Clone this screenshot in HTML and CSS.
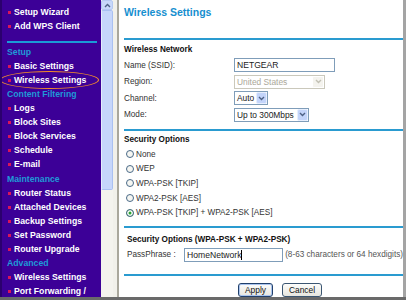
FILE: index.html
```html
<!DOCTYPE html>
<html lang="en">
<head>
    <meta charset="UTF-8">
    <meta name="viewport" content="width=device-width, initial-scale=1.0">
    <title>Wireless Settings</title>
    <link rel="stylesheet" href="styles.css">
</head>
<body>
    <div class="window">
        <!-- left menu -->
        <div class="menu">
            <div class="menu-item">Setup Wizard</div>
            <div class="menu-item">Add WPS Client</div>
            <div class="menu-rule"></div>
            <div class="menu-head">Setup</div>
            <div class="menu-item">Basic Settings</div>
            <div class="menu-item menu-item-circled">Wireless Settings</div>
            <div class="menu-head">Content Filtering</div>
            <div class="menu-item">Logs</div>
            <div class="menu-item">Block Sites</div>
            <div class="menu-item">Block Services</div>
            <div class="menu-item">Schedule</div>
            <div class="menu-item">E-mail</div>
            <div class="menu-head">Maintenance</div>
            <div class="menu-item">Router Status</div>
            <div class="menu-item">Attached Devices</div>
            <div class="menu-item">Backup Settings</div>
            <div class="menu-item">Set Password</div>
            <div class="menu-item">Router Upgrade</div>
            <div class="menu-head">Advanced</div>
            <div class="menu-item">Wireless Settings</div>
            <div class="menu-item">Port Forwarding /</div>
        </div>

        <div class="scrollbar">
            <div class="scroll-btn">
                <svg width="7" height="5" viewBox="0 0 7 5"><path d="M1 4 L3.5 1.5 L6 4" fill="none" stroke="#4d6185" stroke-width="1.4"/></svg>
            </div>
            <div class="scroll-thumb"></div>
        </div>
        <div class="divider"></div>

        <!-- main form -->
        <div class="content">
            <h2 class="title">Wireless Settings</h2>
            <div class="rule"></div>

            <div class="section-title">Wireless Network</div>
            <div class="field">
                <span class="field-label">Name (SSID):</span>
                <span class="textbox textbox-ssid">NETGEAR</span>
            </div>
            <div class="field">
                <span class="field-label">Region:</span>
                <span class="select select-disabled select-region">
                    <span class="select-value">United States</span>
                    <span class="select-arrow">
                        <svg width="7" height="5" viewBox="0 0 7 5"><path d="M1 1 L3.5 3.5 L6 1" fill="none" stroke="#c2c0b4" stroke-width="1.4"/></svg>
                    </span>
                </span>
            </div>
            <div class="field">
                <span class="field-label">Channel:</span>
                <span class="select select-channel">
                    <span class="select-value">Auto</span>
                    <span class="select-arrow">
                        <svg width="7" height="5" viewBox="0 0 7 5"><path d="M1 1 L3.5 3.5 L6 1" fill="none" stroke="#4d6185" stroke-width="1.4"/></svg>
                    </span>
                </span>
            </div>
            <div class="field">
                <span class="field-label">Mode:</span>
                <span class="select select-mode">
                    <span class="select-value">Up to 300Mbps</span>
                    <span class="select-arrow">
                        <svg width="7" height="5" viewBox="0 0 7 5"><path d="M1 1 L3.5 3.5 L6 1" fill="none" stroke="#4d6185" stroke-width="1.4"/></svg>
                    </span>
                </span>
            </div>

            <div class="rule rule-security"></div>
            <div class="section-title section-security">Security Options</div>
            <div class="radio-row"><span class="radio"></span>None</div>
            <div class="radio-row"><span class="radio"></span>WEP</div>
            <div class="radio-row"><span class="radio"></span>WPA-PSK [TKIP]</div>
            <div class="radio-row"><span class="radio"></span>WPA2-PSK [AES]</div>
            <div class="radio-row"><span class="radio radio-checked"></span>WPA-PSK [TKIP] + WPA2-PSK [AES]</div>

            <div class="rule rule-pass"></div>
            <div class="section-title section-pass">Security Options (WPA-PSK + WPA2-PSK)</div>
            <div class="field field-pass">
                <span class="field-label field-label-pass">PassPhrase :</span>
                <span class="textbox textbox-pass">HomeNetwork<span class="caret"></span></span>
                <span class="hint">(8-63 characters or 64 hexdigits)</span>
            </div>

            <div class="rule rule-buttons"></div>
            <div class="buttons">
                <span class="button button-default">Apply</span>
                <span class="button">Cancel</span>
            </div>
        </div>
    </div>
    <div class="statusbar"></div>
</body>
</html>
```

FILE: styles.css
```css
body {
    margin: 0;
    width: 406px;
    height: 300px;
    overflow: hidden;
    font-family: "Liberation Sans", Arial, sans-serif;
    background: #fff;
}
.window {
    display: flex;
    height: 297px;
    overflow: hidden;
}

/* left menu */
.menu {
    width: 99px;
    flex: none;
    padding-top: 5px;
    background-color: #3c0097;
    border-left: 2px solid #2b006e;
    overflow: hidden;
    font-size: 8.7px;
    line-height: 14.1px;
    font-weight: bold;
    white-space: nowrap;
}
.menu-item {
    position: relative;
    padding-left: 6px;
    color: #fff;
}
.menu-item::before {
    content: "";
    display: inline-block;
    width: 3px;
    height: 3px;
    margin-right: 3px;
    vertical-align: 1px;
    background-color: #d8155a;
}
.menu-item-circled::after {
    content: "";
    position: absolute;
    left: -2px;
    top: -2px;
    width: 99px;
    height: 18px;
    box-sizing: border-box;
    border: 1.5px solid #f28b2c;
    border-radius: 50%;
}
.menu-head {
    padding-left: 5px;
    color: #1f9ad8;
}
.menu-rule {
    height: 2px;
    margin: 8px 4px 1.5px 5px;
    background-color: #1b9ad6;
}

/* scrollbar + frame divider */
.scrollbar {
    width: 12px;
    flex: none;
    display: flex;
    flex-direction: column;
    background-color: #f4f3ee;
}
.scroll-btn {
    height: 10px;
    display: flex;
    align-items: center;
    justify-content: center;
    background-color: #c8d8fa;
    border: 1px solid #b5c9f2;
    border-radius: 2px;
    box-sizing: border-box;
}
.scroll-thumb {
    height: 180px;
    background-color: #c6d6fb;
    border: 1px solid #a9c0f1;
    border-left-color: #e4ecfd;
    border-radius: 2px;
    box-sizing: border-box;
}
.divider {
    width: 4px;
    flex: none;
    background-color: #f1f0ea;
    border-right: 2px solid #a9a79c;
}

/* main form */
.content {
    flex: 1;
    min-width: 0;
    padding-left: 5px;
    border-right: 3px solid #a4a4a4;
    font-size: 8.2px;
    color: #333;
    white-space: nowrap;
}
.title {
    margin: 0;
    height: 38px;
    padding-top: 5px;
    box-sizing: border-box;
    font-size: 10.5px;
    line-height: 14px;
    color: #168fcf;
}
.rule {
    height: 2px;
    background-color: #2a9bd0;
}
.rule-security {
    margin-top: 5.5px;
}
.rule-pass {
    margin-top: 6.5px;
}
.rule-buttons {
    margin-top: 11.5px;
}
.section-title {
    margin-top: 3px;
    font-weight: bold;
    line-height: 14px;
    color: #111;
}
.section-security {
    margin-top: 2.5px;
}
.section-pass {
    margin-top: 4.5px;
    padding-left: 3px;
}
.field {
    display: flex;
    align-items: center;
    height: 16.5px;
}
.field-label {
    width: 110px;
    flex: none;
}
.field-pass {
    height: 16px;
}
.field-label-pass {
    width: 57px;
    padding-left: 3px;
}
.textbox {
    height: 14px;
    box-sizing: border-box;
    padding: 0 2px;
    border: 1px solid #7f9db9;
    line-height: 12px;
    font-size: 8.6px;
    color: #222;
}
.textbox-ssid {
    width: 101px;
}
.textbox-pass {
    width: 101px;
}
.caret {
    display: inline-block;
    width: 1px;
    height: 10px;
    vertical-align: -2px;
    background-color: #000;
}
.hint {
    margin-left: 2px;
    color: #555;
}
.select {
    display: flex;
    height: 14px;
    box-sizing: border-box;
    border: 1px solid #7f9db9;
    font-size: 8.4px;
    line-height: 12px;
    color: #222;
}
.select-value {
    flex: 1;
    padding-left: 2px;
    overflow: hidden;
}
.select-arrow {
    width: 9px;
    display: flex;
    align-items: center;
    justify-content: center;
    background-color: #c3d4fa;
    border: 1px solid #e6eefe;
    border-radius: 2px;
}
.select-region {
    width: 91px;
}
.select-channel {
    width: 34px;
}
.select-mode {
    width: 75px;
}
.select-disabled {
    border-color: #cac8bb;
    color: #aba899;
}
.select-disabled .select-arrow {
    width: 10px;
    background-color: #f4f3ee;
    border-color: #fff;
}
.radio-row {
    display: flex;
    align-items: center;
    height: 14.6px;
}
.radio {
    width: 8px;
    height: 8px;
    margin: 0 2px 0 2px;
    box-sizing: border-box;
    border: 1px solid #4a6a88;
    border-radius: 50%;
    background-color: #f6f6f2;
}
.radio-checked {
    background-color: #2aa52e;
    box-shadow: inset 0 0 0 1.5px #fff;
}
.buttons {
    display: flex;
    gap: 9px;
    margin-top: 6.5px;
    padding-left: 114px;
}
.button {
    height: 14px;
    box-sizing: border-box;
    padding: 0 6px;
    border: 1px solid #3b5672;
    border-radius: 3px;
    background: linear-gradient(#fdfdfb, #e7e6df);
    font-size: 8.4px;
    line-height: 12px;
    color: #111;
}
.button-default {
    border-color: #21406b;
    box-shadow: inset 0 0 0 1px #aac4ee;
}
.statusbar {
    height: 3px;
    background-color: #6a6a6a;
}
```
